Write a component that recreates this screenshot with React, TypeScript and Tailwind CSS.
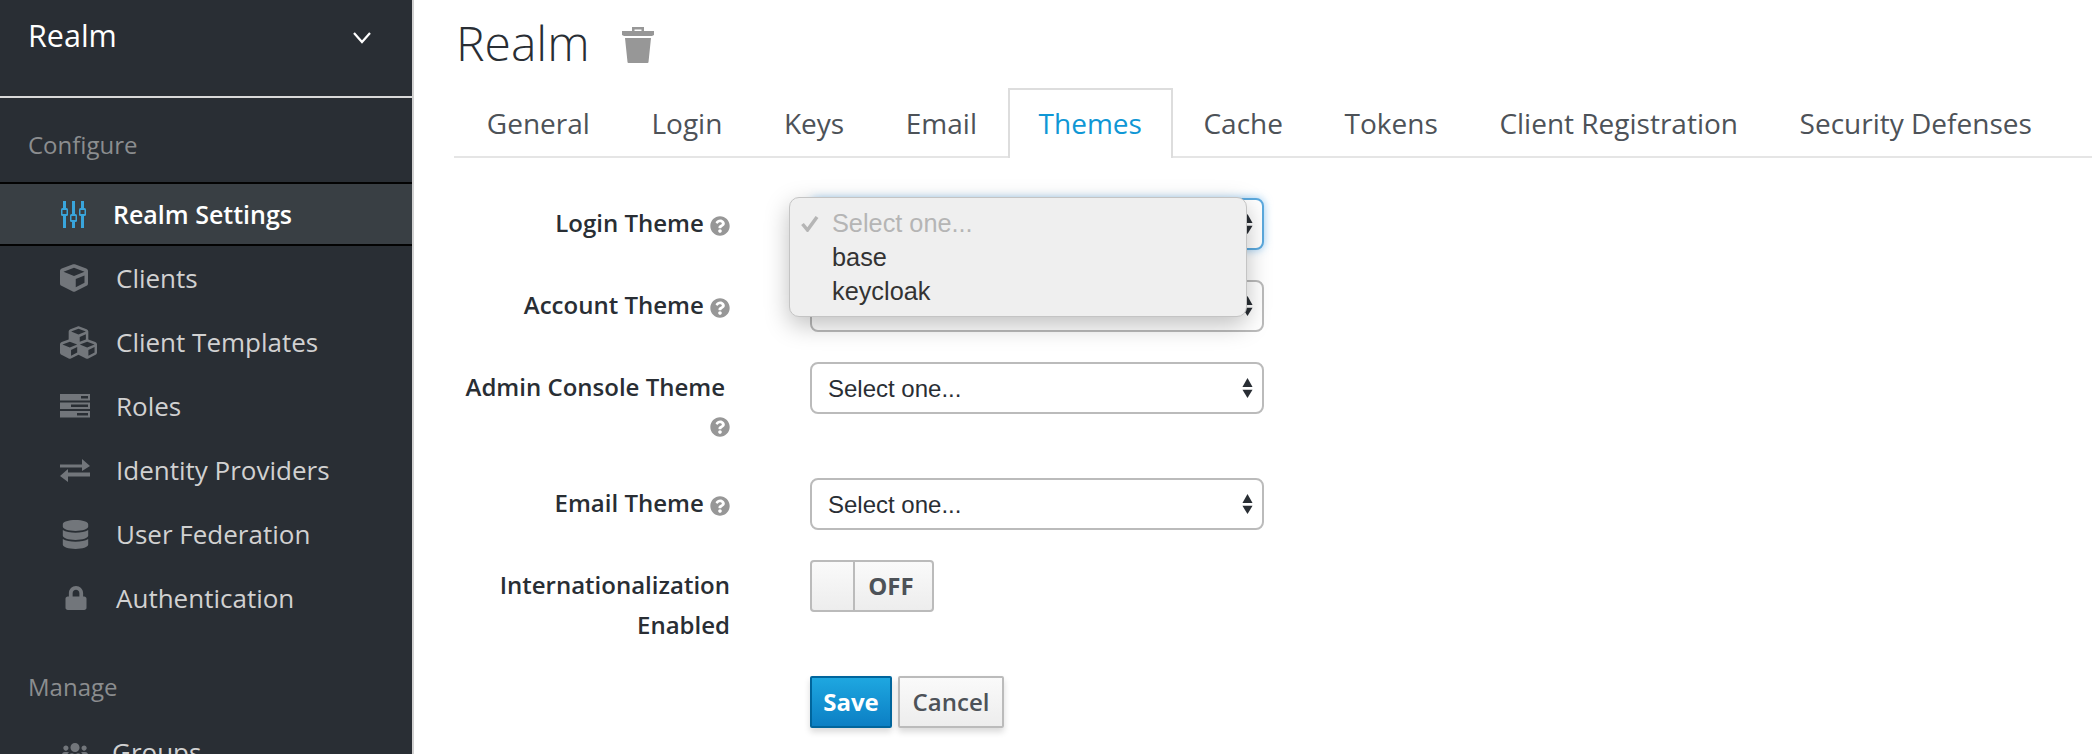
import { FaCube, FaCubes, FaDatabase, FaLock, FaQuestionCircle, FaUsers } from "react-icons/fa";
import type { ReactNode } from "react";

const Sliders = () => (
  <svg width="27" height="27" viewBox="0 0 27 27" className="text-[#39a5dc]" fill="currentColor">
    <rect x="3" y="0" width="3" height="27" />
    <rect x="12" y="0" width="3" height="27" />
    <rect x="21" y="0" width="3" height="27" />
    <rect x="1" y="7" width="7" height="8" rx="1.5" />
    <rect x="2.5" y="9" width="4" height="4" fill="#393f44" />
    <rect x="10" y="13" width="7" height="8" rx="1.5" />
    <rect x="11.5" y="15" width="4" height="4" fill="#393f44" />
    <rect x="19" y="7" width="7" height="8" rx="1.5" />
    <rect x="20.5" y="9" width="4" height="4" fill="#393f44" />
  </svg>
);

const Server = () => (
  <svg width="30" height="24" viewBox="0 0 30 24" fill="#72767b">
    <rect x="0" y="0" width="30" height="6.5" />
    <rect x="0" y="8.5" width="30" height="6.5" />
    <rect x="0" y="17" width="30" height="6.5" />
    <rect x="21" y="2" width="7" height="2.5" fill="#292e34" />
    <rect x="11" y="10.5" width="17" height="2.5" fill="#292e34" />
    <rect x="17" y="19" width="11" height="2.5" fill="#292e34" />
  </svg>
);

const Exchange = () => (
  <svg width="30" height="24" viewBox="0 0 30 24" fill="#72767b">
    <path d="M0 6.500h22V1l8 7-8 5V9.500H0z" />
    <path d="M30 14.500H8V11l-8 7 8 6v-5.500h22z" />
  </svg>
);

const Trash = () => (
  <svg width="32" height="37" viewBox="0 0 32 37" fill="#979797">
    <path d="M10 5V1h12v4h-2.500V3.500h-7V5z" />
    <path d="M0 5h32v4l-2 1H2l-2-1z" />
    <path d="M3 12h26l-2.500 24a1 1 0 0 1-1 1h-19a1 1 0 0 1-1-1z" />
  </svg>
);

const Arrows = () => (
  <svg width="11" height="22" viewBox="0 0 12 22" fill="#292e34" className="shrink-0">
    <path d="M6 0l5.500 10H.5z" />
    <path d="M.5 13h11L6 22z" />
  </svg>
);

const Help = () => <FaQuestionCircle className="inline-block text-[20px] text-[#979797]" />;

function NavItem({ icon, label, active, textClass }: { icon: ReactNode; label: string; active?: boolean; textClass: string }) {
  return (
    <div className={active ? "h-[64px] flex items-center bg-[#393f44] border-y-2 border-[#030303] text-white" : "h-[64px] flex items-center text-[#d1d1d1]"}>
      <div className="w-[60px] shrink-0" />
      <div className="w-[40px] shrink-0 flex justify-start items-center text-[#72767b]">{icon}</div>
      <span className={`leading-none ${textClass}`}>{label}</span>
    </div>
  );
}

function SelectBox({ focus, text = "Select one..." }: { focus?: boolean; text?: string }) {
  return (
    <div className={focus
      ? "w-[454px] h-[52px] shrink-0 rounded-[8px] border-2 border-[#5ba9de] bg-white shadow-[0_0_8px_rgba(82,168,236,0.6)] flex items-center justify-between pl-[16px] pr-[9px] font-['Liberation_Sans',sans-serif] text-[24px] text-[#292e34]"
      : "w-[454px] h-[52px] shrink-0 rounded-[8px] border-2 border-[#bbbbbb] bg-white flex items-center justify-between pl-[16px] pr-[9px] font-['Liberation_Sans',sans-serif] text-[24px] text-[#292e34]"}>
      <span className="pt-[2px]">{text}</span>
      <Arrows />
    </div>
  );
}

function Label({ children }: { children: ReactNode }) {
  return (
    <div className="w-[275px] mr-[80px] shrink-0 text-right font-semibold text-[24px] leading-[40px] pt-[5px] text-[#292e34]">
      {children}
    </div>
  );
}

export default function App() {
  const tabs = ["General", "Login", "Keys", "Email", "Themes", "Cache", "Tokens", "Client Registration", "Security Defenses"];
  return (
    <div className="w-[2092px] h-[754px] overflow-hidden flex bg-white font-['Open_Sans',sans-serif]">
      <aside className="w-[414px] h-[754px] shrink-0 overflow-hidden bg-[#292e34] border-r-2 border-[#d1d1d1]">
        <div className="h-[98px] border-b-2 border-[#d9d9d9] pl-[28px] pr-[40px] pt-[12px] flex items-start justify-between text-white">
          <span className="text-[30.500px] leading-[46px]">Realm</span>
          <svg width="20" height="14" viewBox="0 0 20 14" className="mt-[19px]" fill="none" stroke="#ffffff" strokeWidth="2.200"><path d="M2 2l8 9 8-9" /></svg>
        </div>
        <div className="h-[84px] pl-[28px] pt-[29px] text-[24px] leading-[36px] text-[#8b8d8f]">Configure</div>
        <NavItem active icon={<Sliders />} label="Realm Settings" textClass="ml-[13px] font-semibold text-[25px]" />
        <NavItem icon={<FaCube className="text-[28px]" />} label="Clients" textClass="ml-[16px] text-[26px]" />
        <NavItem icon={<FaCubes className="text-[37px]" />} label="Client Templates" textClass="ml-[16px] text-[26px]" />
        <NavItem icon={<Server />} label="Roles" textClass="ml-[16px] text-[26px]" />
        <NavItem icon={<Exchange />} label="Identity Providers" textClass="ml-[16px] text-[26px]" />
        <NavItem icon={<span className="pl-[1px] flex"><FaDatabase className="text-[29px]" /></span>} label="User Federation" textClass="ml-[16px] text-[26px]" />
        <NavItem icon={<span className="pl-[4px] flex"><FaLock className="text-[24px]" /></span>} label="Authentication" textClass="ml-[16px] text-[26px]" />
        <div className="h-[90px] pl-[28px] pt-[39px] text-[24px] leading-[36px] text-[#8b8d8f]">Manage</div>
        <NavItem icon={<span className="pl-[2px] flex"><FaUsers className="text-[26px]" /></span>} label="Groups" textClass="ml-[12px] text-[26px]" />
      </aside>

      <main className="flex-1 min-w-0">
        <div className="pl-[42px] h-[88px] flex items-start">
          <h1 className="text-[48px] leading-[68px] mt-[9px] font-light text-[#292e34]">Realm</h1>
          <div className="ml-[32px] mt-[26px]"><Trash /></div>
        </div>

        <div className="ml-[40px] pl-[2px] h-[70px] flex border-b-2 border-[#e5e5e5]">
          {tabs.map((t) =>
            t === "Themes" ? (
              <div key={t} className="h-[70px] pb-[2px] px-[28.8px] border-x-2 border-t-2 border-[#dddddd] bg-white flex items-center text-[28px] text-[#0f97d5]">{t}</div>
            ) : (
              <div key={t} className="h-[70px] pb-[2px] px-[30.8px] border-t-2 border-transparent flex items-center text-[28px] text-[#4d5258]">{t}</div>
            )
          )}
        </div>

        <form className="relative pt-[40px]">
          <div className="ml-[41px] flex mb-[30px]">
            <Label>Login Theme <Help /></Label>
            <SelectBox focus />
          </div>
          <div className="ml-[41px] flex mb-[30px]">
            <Label>Account Theme <Help /></Label>
            <SelectBox />
          </div>
          <div className="ml-[41px] flex mb-[31px]">
            <Label><span className="pr-[5px]">Admin Console Theme</span><br /><span className="relative -top-[3px]"><Help /></span></Label>
            <SelectBox />
          </div>
          <div className="ml-[41px] flex mb-[30px]">
            <Label>Email Theme <Help /></Label>
            <SelectBox />
          </div>
          <div className="ml-[41px] flex mb-[31px]">
            <Label>Internationalization Enabled</Label>
            <div className="w-[124px] h-[52px] shrink-0 flex rounded-[4px] border-2 border-[#bbbbbb] bg-gradient-to-b from-[#fafafa] to-[#ededed]">
              <div className="w-[43px] h-full border-r-2 border-[#bbbbbb] rounded-l-[2px]" />
              <div className="flex-1 flex items-center justify-center pr-[5px] font-bold text-[24px] text-[#4d5258]">OFF</div>
            </div>
          </div>
          <div className="ml-[396px] flex gap-[6px]">
            <button type="button" className="w-[82px] h-[52px] pb-[1px] rounded-[2px] border-2 border-[#00659c] bg-gradient-to-b from-[#1ea7e0] to-[#0c7fc4] text-white font-bold text-[24px] shadow-[0_4px_6px_rgba(0,0,0,0.15)]">Save</button>
            <button type="button" className="w-[106px] h-[52px] pb-[1px] rounded-[2px] border-2 border-[#bbbbbb] bg-gradient-to-b from-[#fafafa] to-[#ededed] text-[#4d5258] font-semibold text-[24px] shadow-[0_4px_6px_rgba(0,0,0,0.15)]">Cancel</button>
          </div>

          <div className="absolute left-[375px] top-[39px] w-[458px] h-[120px] rounded-[10px] bg-[#efefef] border border-[#c4c4c4] shadow-[0_8px_24px_rgba(0,0,0,0.25)] font-['Liberation_Sans',sans-serif] text-[25.300px] pt-[8px]">
            <div className="relative h-[34px] pl-[42px] leading-[34px] text-[#b5b5b5]">
              <svg width="18" height="16" viewBox="0 0 18 16" className="absolute left-[11px] top-[10px]" fill="none" stroke="#b5b5b5" strokeWidth="3.500"><path d="M1.500 8l5 6L16 1" /></svg>
              Select one...
            </div>
            <div className="h-[34px] pl-[42px] leading-[34px] text-[#333333]">base</div>
            <div className="h-[34px] pl-[42px] leading-[34px] text-[#333333]">keycloak</div>
          </div>
        </form>
      </main>
    </div>
  );
}
